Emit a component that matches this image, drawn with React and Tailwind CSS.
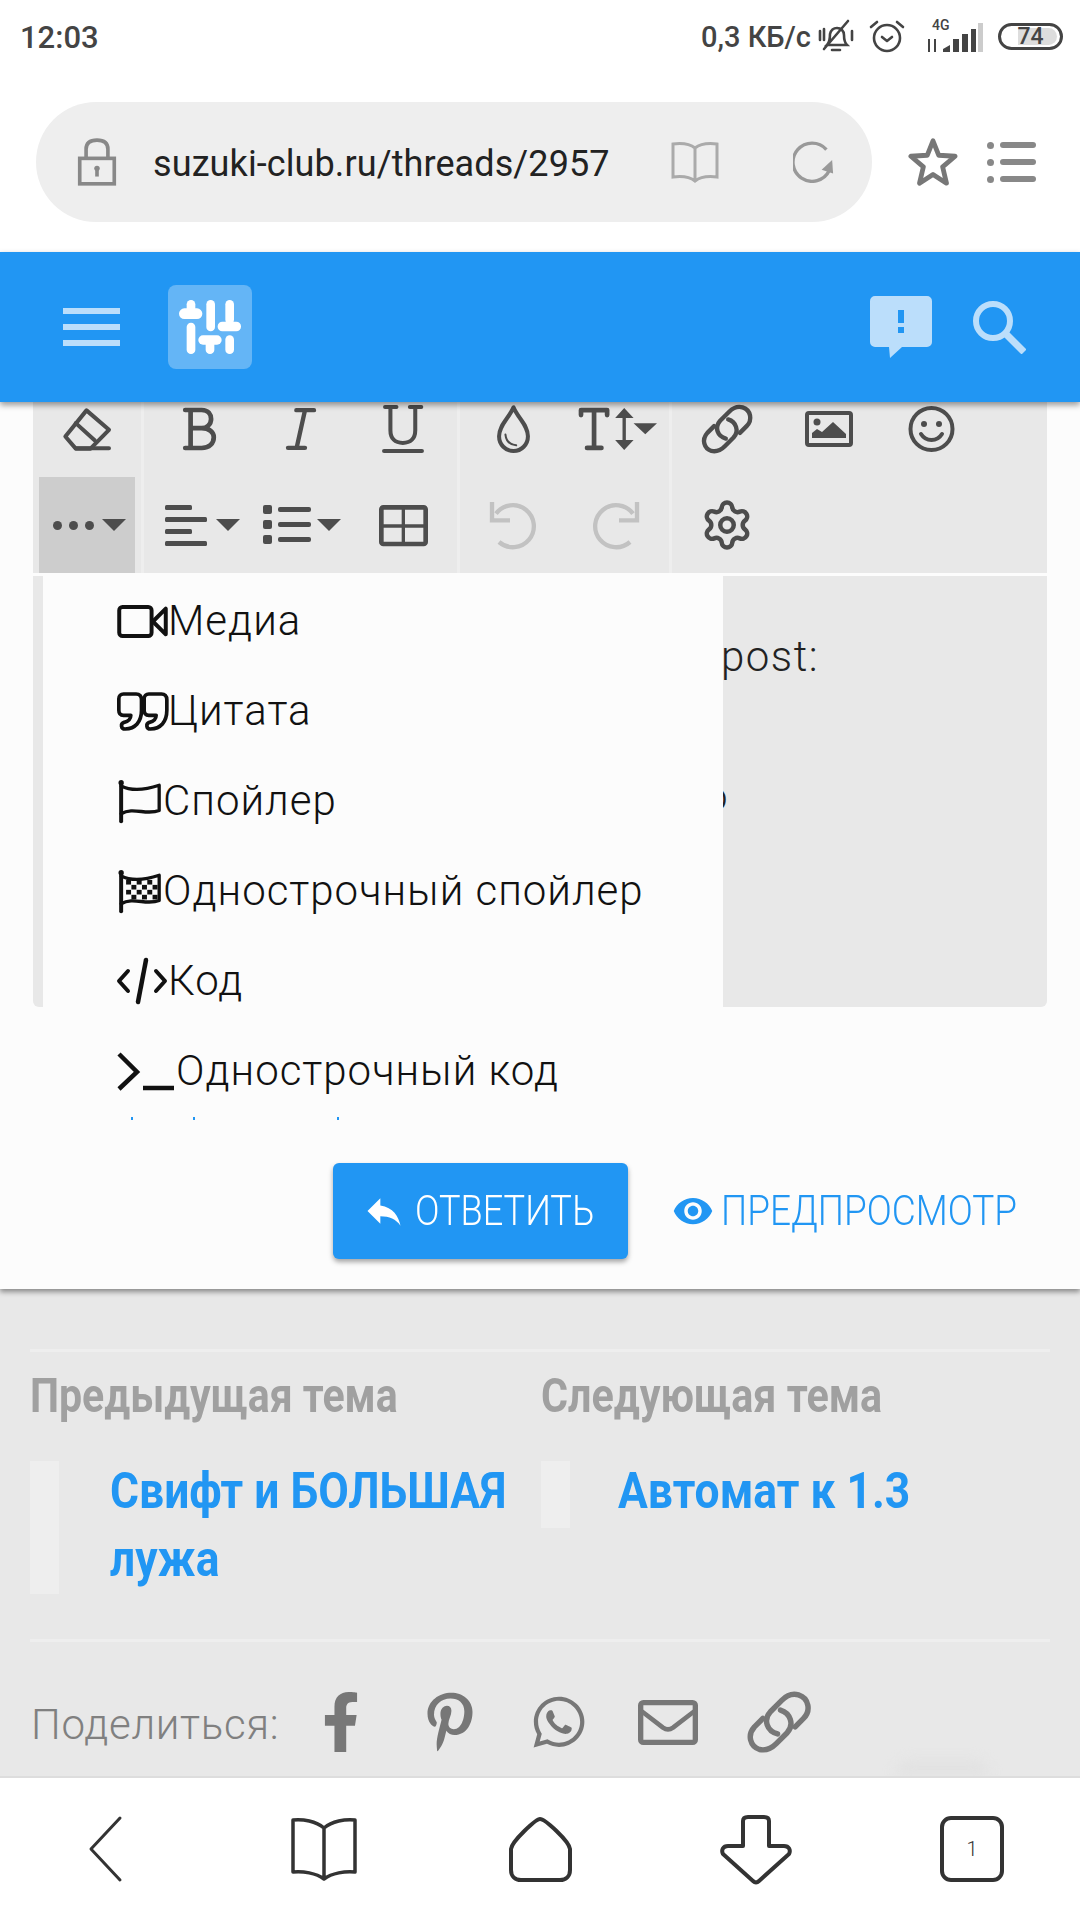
import { Settings } from 'lucide-react';
import { FaFacebookF, FaPinterestP, FaWhatsapp } from 'react-icons/fa';
import { MdReply, MdVisibility } from 'react-icons/md';

const StatusBar = () => (
  <div className="flex h-[72px] items-center justify-between bg-white pl-[20px] pr-[17px] font-medium text-[#444]">
    <span className="pt-[4px] text-[31px]">12:03</span>
    <div className="flex items-center">
      <span className="pt-[4px] text-[29px]">0,3 КБ/с</span>
      <svg viewBox="0 0 36 34" className="ml-[7px] h-[34px] w-[36px]" fill="none" stroke="#444" strokeWidth="2.6" strokeLinecap="round">
        <path d="M9 26c3-3 3-7 3-11 1-4 4-6 7-6 4 0 7 3 7 7 0 5 1 8 3 10H9zM14 31h8M6 30 30 2M2 12v9M6 10v11M34 12v9" />
      </svg>
      <svg viewBox="0 0 36 34" className="ml-[15px] h-[34px] w-[36px]" fill="none" stroke="#444" strokeWidth="2.6" strokeLinecap="round" strokeLinejoin="round">
        <circle cx="18" cy="19" r="13" />
        <path d="M13 18l5 4 5-4M2 8l6-5M34 8l-6-5" />
      </svg>
      <div className="relative ml-[21px] h-[32px] w-[57px]">
        <span className="absolute left-[6px] top-[-3px] text-[14px] leading-[16px]">4G</span>
        <svg viewBox="0 0 57 32" className="h-[32px] w-[57px]" fill="#444">
          <rect x="2" y="19" width="2" height="13" /><rect x="8" y="19" width="2" height="13" />
          <path d="M17 32v-3l7-4v7z" />
          <rect x="27" y="19" width="6" height="13" /><rect x="36" y="14" width="6" height="18" /><rect x="45" y="9" width="5" height="23" />
          <rect x="52" y="3" width="5" height="29" fill="#ccc" />
        </svg>
      </div>
      <div className="relative ml-[15px] flex h-[27px] w-[65px] items-center justify-center rounded-full border-[3px] border-[#444]">
        <div className="absolute bottom-[2px] left-[17px] top-[2px] w-[39px] rounded-r-full bg-[#ddd]" />
        <span className="relative text-[23px] leading-none">74</span>
      </div>
    </div>
  </div>
);

const AddressBar = () => (
  <div className="flex h-[180px] items-center bg-white pl-[36px]">
    <div className="flex h-[120px] w-[836px] items-center rounded-full bg-[#eee] pl-[41px]">
      <svg viewBox="0 0 44 52" className="h-[50px] w-[40px]" fill="none" stroke="#888" strokeWidth="4">
        <rect x="3" y="22" width="38" height="28" />
        <path d="M10 22V12C10 5 15 2 22 2s12 3 12 10v10" />
        <circle cx="22" cy="33" r="3" fill="#888" stroke="none" />
        <path d="M22 33v9" />
      </svg>
      <span className="ml-[36px] w-[518px] pt-[4px] text-[36px] tracking-[0.1px] text-[#222]">suzuki-club.ru/threads/2957</span>
      <svg viewBox="0 0 48 42" className="h-[42px] w-[48px]" fill="none" stroke="#aaa" strokeWidth="3">
        <path d="M24 7C19 3 10 2 2 3v33c8-1 17 0 22 4 5-4 14-5 22-4V3c-8-1-17 0-22 4v33" />
      </svg>
      <svg viewBox="0 0 44 44" className="ml-[74px] h-[42px] w-[42px]" fill="none" stroke="#999" strokeWidth="3.5">
        <path d="M38 31a20 20 0 1 1-3-22" />
        <path d="M30 30l11-10 1 14z" fill="#999" stroke="none" />
      </svg>
    </div>
    <svg viewBox="0 0 52 52" className="ml-[36px] h-[50px] w-[50px]" fill="none" stroke="#777" strokeWidth="5" strokeLinejoin="round">
      <path d="M26 4l6 15 17 1-13 11 4 17-14-9-14 9 4-17L3 20l17-1z" />
    </svg>
    <div className="ml-[29px] flex h-[41px] flex-col justify-between">
      {[0, 1, 2].map((i) => (
        <div key={i} className="flex items-center gap-[6px]">
          <div className="h-[7px] w-[7px] rounded-full bg-[#888]" />
          <div className="h-[6px] w-[36px] rounded-full bg-[#888]" />
        </div>
      ))}
    </div>
  </div>
);

const Header = () => (
  <div className="relative z-20 flex h-[150px] items-center bg-[#2196f3] pl-[63px] pr-[54px] shadow-[0_3px_6px_rgba(0,0,0,0.4)]">
    <div className="flex flex-col gap-[10px]">
      <div className="h-[6px] w-[57px] bg-[#bbdefb]" />
      <div className="h-[6px] w-[57px] bg-[#bbdefb]" />
      <div className="h-[6px] w-[57px] bg-[#bbdefb]" />
    </div>
    <div className="ml-[48px] flex h-[84px] w-[84px] items-center justify-center rounded-[8px] bg-[#64b5f6]">
      <svg viewBox="417 118 186 162" className="h-[54px] w-[62px]" fill="#fff">
        <rect x="440" y="118" width="26" height="50" rx="13" /><rect x="417" y="143" width="70" height="32" rx="16" /><rect x="440" y="186" width="26" height="94" rx="13" />
        <rect x="499" y="118" width="26" height="94" rx="13" /><rect x="475" y="224" width="70" height="28" rx="14" /><rect x="497" y="235" width="26" height="45" rx="13" />
        <rect x="556" y="118" width="26" height="72" rx="13" /><rect x="533" y="183" width="70" height="29" rx="14" /><rect x="556" y="224" width="26" height="56" rx="13" />
      </svg>
    </div>
    <div className="flex-1" />
    <svg viewBox="0 0 62 62" className="h-[62px] w-[62px]">
      <path d="M5 0h52a5 5 0 0 1 5 5v41a5 5 0 0 1-5 5H32L20 62l-1-11H5a5 5 0 0 1-5-5V5a5 5 0 0 1 5-5z" fill="#bbdefb" />
      <rect x="28" y="14" width="6" height="13" fill="#2196f3" /><rect x="28" y="31" width="6" height="6" fill="#2196f3" />
    </svg>
    <svg viewBox="0 0 54 54" className="ml-[40px] h-[54px] w-[54px]" fill="none" stroke="#bbdefb" strokeWidth="6">
      <circle cx="21" cy="21" r="17" />
      <path d="M33 33l19 19" strokeWidth="7" />
    </svg>
  </div>
);

const Tb = ({ vb, w, h, sw = 12, color = '#4d4d4d', children, className = '' }) => (
  <svg viewBox={vb} style={{ width: w, height: h }} className={`overflow-visible ${className}`} fill="none" stroke={color} strokeWidth={sw} strokeLinecap="round" strokeLinejoin="round">
    {children}
  </svg>
);

const Caret = () => (
  <svg viewBox="0 0 24 12" className="h-[12px] w-[24px]" fill="#4d4d4d"><path d="M0 0h24L12 12z" /></svg>
);

const LinkIcon = ({ w = 48, h = 48, color = '#4d4d4d', sw = 13 }) => (
  <Tb vb="787 15 143 143" w={w} h={h} sw={sw} color={color}>
    <path d="M897 98L917 78C935 60 930 30 905 22C888 17 875 25 865 35L838 62C820 82 830 108 855 115" />
    <path d="M820 78L800 98C782 118 790 145 812 152C830 156 842 148 852 138L878 112C896 92 885 65 862 58" />
  </Tb>
);

const Btn = ({ children }) => (
  <div className="flex h-[96px] w-[102px] items-center justify-center">{children}</div>
);

const Group = ({ className = '', children }) => (
  <div className={`flex border-r-[3px] border-[#eee] pr-[3px] ${className}`}>{children}</div>
);

const Toolbar = () => (
  <div className="relative z-10 mx-[33px] -mt-[21px] bg-[#e8e8e8] pl-[3px]">
    <div className="flex">
      <Group>
        <Btn>
          <Tb vb="70 25 143 125" w={48} h={42}>
            <path d="M140 32L207 90L152 146H108L77 110Z" />
            <path d="M108 70L165 122M108 145H207" />
          </Tb>
        </Btn>
      </Group>
      <Group className="ml-[4px]">
        <Btn>
          <Tb vb="430 25 97 125" w={33} h={42} sw={14}>
            <path d="M436 31H485C505 31 513 45 513 58C513 74 500 85 485 85H452M485 85C508 85 521 98 521 112C521 130 508 144 485 144H436M452 31V144" />
          </Tb>
        </Btn>
        <Btn>
          <Tb vb="735 25 90 125" w={30} h={42} sw={13}>
            <path d="M766 31H819M741 144H792M792 31L767 144" />
          </Tb>
        </Btn>
        <Btn>
          <Tb vb="1023 15 125 143" w={42} h={48} sw={12}>
            <path d="M1032 21H1066M1106 21H1140M1048 21V90C1048 115 1062 128 1085 128C1108 128 1122 115 1122 90V21M1029 152H1142" />
          </Tb>
        </Btn>
      </Group>
      <Group className="ml-[2px]">
        <Btn>
          <Tb vb="170 15 98 143" w={33} h={48}>
            <path d="M219 22C205 55 176 75 176 108C176 133 195 152 219 152C243 152 262 133 262 108C262 75 233 55 219 22Z" />
            <path d="M195 103C197 122 208 133 227 135" strokeWidth="6" />
          </Tb>
        </Btn>
        <Btn>
          <Tb vb="417 25 233 125" w={78} h={42} className="ml-[6px]">
            <path d="M423 46V31H501V46M462 31V144M441 144H484" strokeWidth="14" />
            <path d="M552 40V135" strokeWidth="10" />
            <path d="M552 25L580 55H525ZM552 150L580 120H525ZM580 70H650L615 103Z" fill="#4d4d4d" stroke="none" />
          </Tb>
        </Btn>
      </Group>
      <div className="ml-[4px] flex">
        <Btn><LinkIcon /></Btn>
        <Btn>
          <Tb vb="0 0 48 36" w={48} h={36} sw={4}>
            <rect x="2" y="2" width="44" height="32" rx="2" />
            <circle cx="12" cy="11" r="3.5" fill="#4d4d4d" stroke="none" />
            <path d="M7 27v-5l5-4 5 3 11-10 13 12v4z" fill="#4d4d4d" stroke="none" />
          </Tb>
        </Btn>
        <Btn>
          <Tb vb="0 0 47 46" w={47} h={46} sw={4}>
            <ellipse cx="23.5" cy="23" rx="21" ry="21" />
            <circle cx="16" cy="18" r="3" fill="#4d4d4d" stroke="none" />
            <circle cx="31" cy="18" r="3" fill="#4d4d4d" stroke="none" />
            <path d="M13 28c5 8 16 8 21 0" />
          </Tb>
        </Btn>
      </div>
    </div>
    <div className="flex">
      <Group>
        <div className="w-[3px]" />
        <div className="flex h-[96px] w-[96px] items-center justify-center gap-[8px] bg-[#cdcdcd] pl-[4px]">
          <div className="flex gap-[7px]">
            <div className="h-[9px] w-[9px] rounded-full bg-[#4d4d4d]" />
            <div className="h-[9px] w-[9px] rounded-full bg-[#4d4d4d]" />
            <div className="h-[9px] w-[9px] rounded-full bg-[#4d4d4d]" />
          </div>
          <Caret />
        </div>
        <div className="w-[3px]" />
      </Group>
      <Group className="ml-[4px]">
        <Btn>
          <div className="flex items-center gap-[9px] pl-[6px]">
            <svg viewBox="0 0 42 41" className="h-[41px] w-[42px]" fill="#4d4d4d">
              <rect x="0" y="0" width="27" height="5" rx="1.5" /><rect x="0" y="12" width="42" height="5" rx="1.5" />
              <rect x="0" y="24" width="27" height="5" rx="1.5" /><rect x="0" y="36" width="42" height="5" rx="1.5" />
            </svg>
            <Caret />
          </div>
        </Btn>
        <Btn>
          <div className="flex items-center gap-[6px] pl-[2px]">
            <svg viewBox="0 0 48 40" className="h-[40px] w-[48px]" fill="#4d4d4d">
              <rect x="0" y="0" width="9" height="9" rx="2" /><rect x="0" y="15" width="9" height="9" rx="2" /><rect x="0" y="30" width="9" height="9" rx="2" />
              <rect x="15" y="2" width="33" height="5" rx="2" /><rect x="15" y="17" width="33" height="5" rx="2" /><rect x="15" y="32" width="33" height="5" rx="2" />
            </svg>
            <Caret />
          </div>
        </Btn>
        <Btn>
          <Tb vb="1015 312 145 126" w={49} h={42} sw={14}>
            <rect x="1021" y="322" width="133" height="110" rx="6" />
            <path d="M1087 325V430M1021 378H1154" strokeWidth="10" strokeLinecap="butt" />
          </Tb>
        </Btn>
      </Group>
      <Group className="ml-[2px]">
        <Btn>
          <Tb vb="147 305 141 138" w={47} h={46} color="#c2c2c2" sw={13}>
            <path d="M174 425A63 63 0 1 0 165 340" strokeLinecap="butt" />
            <path d="M153 305V360H207" strokeLinecap="butt" strokeLinejoin="miter" />
          </Tb>
        </Btn>
        <Btn>
          <Tb vb="147 305 141 138" w={47} h={46} color="#c2c2c2" sw={13} className="-scale-x-100">
            <path d="M174 425A63 63 0 1 0 165 340" strokeLinecap="butt" />
            <path d="M153 305V360H207" strokeLinecap="butt" strokeLinejoin="miter" />
          </Tb>
        </Btn>
      </Group>
      <div className="ml-[4px] flex">
        <Btn><Settings size={54} strokeWidth={2} className="text-[#4d4d4d]" /></Btn>
      </div>
    </div>
  </div>
);

const flagSquares = [];
for (let r = 0; r < 4; r++) {
  for (let c = 0; c < 6; c++) {
    if ((r + c) % 2 === 0) flagSquares.push([78 + c * 16, 590 + r * 15]);
  }
}

const menuItems = [
  {
    label: 'Медиа',
    gap: 0,
    icon: (
      <Tb vb="52 35 153 100" w={51} h={33} color="#111">
        <rect x="58" y="41" width="98" height="88" rx="10" />
        <path d="M160 85L199 46V124Z" />
      </Tb>
    ),
  },
  {
    label: 'Цитата',
    gap: 0,
    icon: (
      <Tb vb="52 295 150 117" w={51} h={39} sw={11} color="#111">
        <path d="M70 301H108C118 301 124 308 124 318V350C124 385 105 405 75 406C62 406 60 390 72 386C85 384 92 375 92 365H70C60 365 56 358 56 350V315C56 306 62 301 70 301Z" />
        <path d="M146 301H184C194 301 200 308 200 318V350C200 385 181 405 151 406C138 406 136 390 148 386C161 384 168 375 168 365H146C136 365 132 358 132 350V315C132 306 138 301 146 301Z" />
      </Tb>
    ),
  },
  {
    label: 'Спойлер',
    gap: 1,
    icon: (
      <Tb vb="52 560 133 130" w={45} h={43} sw={10} color="#111">
        <circle cx="63" cy="568" r="8" fill="#111" stroke="none" />
        <path d="M63 570V685" strokeWidth="12" />
        <path d="M63 578C90 592 130 592 178 576V652C140 668 100 640 63 662" />
      </Tb>
    ),
  },
  {
    label: 'Однострочный спойлер',
    gap: 1,
    icon: (
      <Tb vb="52 560 133 130" w={45} h={43} sw={10} color="#111">
        <circle cx="63" cy="568" r="8" fill="#111" stroke="none" />
        <path d="M63 570V685" strokeWidth="12" />
        <path d="M63 578C90 592 130 592 178 576V652C140 668 100 640 63 662" />
        {flagSquares.map(([x, y]) => (
          <rect key={`${x}-${y}`} x={x} y={y} width="15" height="14" fill="#111" stroke="none" />
        ))}
      </Tb>
    ),
  },
  {
    label: 'Код',
    gap: 1,
    icon: (
      <Tb vb="0 0 50 44" w={50} h={44} sw={4} color="#111">
        <path d="M11 12L2 22l9 10M39 12l9 10-9 10" />
        <path d="M29 1L21 43" strokeWidth="4.5" />
      </Tb>
    ),
  },
  {
    label: 'Однострочный код',
    gap: 2,
    icon: (
      <Tb vb="0 0 57 39" w={57} h={39} sw={4.5} color="#111">
        <path d="M2 2L20 20L2 37" strokeLinecap="butt" strokeLinejoin="miter" />
        <path d="M26 36H57" strokeLinecap="butt" />
      </Tb>
    ),
  },
];

const InsertMenu = () => (
  <div className="absolute left-[10px] top-0 z-10 h-[544px] w-[680px] bg-[#fcfcfc] pl-[74px]">
    {menuItems.map((item) => (
      <div key={item.label} className="flex h-[90px] items-center text-[#111]">
        {item.icon}
        <span style={{ marginLeft: item.gap }} className="whitespace-nowrap text-[42px] font-light leading-none tracking-[1px]">{item.label}</span>
      </div>
    ))}
    <div className="absolute bottom-0 left-[88px] h-[3px] w-[2px] bg-[#2196f3]" />
    <div className="absolute bottom-0 left-[150px] h-[3px] w-[2px] bg-[#2196f3]" />
    <div className="absolute bottom-0 left-[294px] h-[3px] w-[2px] bg-[#2196f3]" />
  </div>
);

const Editor = () => (
  <div className="relative mx-[33px] mt-[3px] h-[431px] rounded-b-[6px] bg-[#e8e8e8] pl-[688px] pt-[54px] text-[42px] font-light leading-[54px] tracking-[1.5px] text-[#222]">
    <InsertMenu />
    <p>post:</p>
    <p className="mt-[86px] -ml-[17px]">о</p>
  </div>
);

const Actions = () => (
  <div className="flex h-[282px] items-start pl-[333px] pt-[156px]">
    <div className="flex h-[96px] w-[295px] items-center rounded-[6px] bg-[#2196f3] pl-[29px] text-white shadow-[0_3px_5px_rgba(0,0,0,0.35)]">
      <MdReply size={44} />
      <span className="ml-[9px] origin-left scale-x-[0.86] whitespace-nowrap text-[42px] font-light leading-none">ОТВЕТИТЬ</span>
    </div>
    <div className="ml-[44px] flex h-[96px] items-center text-[#2196f3]">
      <MdVisibility size={42} />
      <span className="ml-[7px] origin-left scale-x-[0.88] whitespace-nowrap text-[42px] font-light leading-none">ПРЕДПРОСМОТР</span>
    </div>
  </div>
);

const ThreadNav = () => (
  <div className="mx-[30px] mt-[60px] grid h-[293px] grid-cols-[511px_1fr] border-y-[3px] border-[#eee] pt-[19px]">
    <div>
      <div className="origin-left scale-x-[0.855] whitespace-nowrap text-[48px] font-bold leading-[50px] text-[#a0a0a0]">Предыдущая тема</div>
      <div className="mt-[40px] flex">
        <div className="h-[133px] w-[29px] shrink-0 bg-[#eee]" />
        <div className="-mt-[4px] ml-[51px] origin-left scale-x-[0.888] whitespace-nowrap text-[50px] font-bold leading-[68px] text-[#2196f3]">Свифт и БОЛЬШАЯ<br />лужа</div>
      </div>
    </div>
    <div>
      <div className="origin-left scale-x-[0.86] whitespace-nowrap text-[48px] font-bold leading-[50px] text-[#a0a0a0]">Следующая тема</div>
      <div className="mt-[40px] flex">
        <div className="h-[67px] w-[29px] shrink-0 bg-[#eee]" />
        <div className="-mt-[4px] ml-[48px] origin-left scale-x-[0.888] whitespace-nowrap text-[50px] font-bold leading-[68px] text-[#2196f3]">Автомат к 1.3</div>
      </div>
    </div>
  </div>
);

const ShareRow = () => (
  <div className="relative mt-[50px] flex h-[60px] items-center pl-[31px] text-[#777]">
    <span className="w-[255px] whitespace-nowrap pt-[5px] text-[42px] font-light leading-none tracking-[0.7px] text-[#808080]">Поделиться:</span>
    <div className="flex w-[109px] justify-center"><FaFacebookF size={60} /></div>
    <div className="flex w-[109px] justify-center"><FaPinterestP size={60} /></div>
    <div className="flex w-[109px] justify-center"><FaWhatsapp size={58} /></div>
    <div className="flex w-[109px] justify-center">
      <Tb vb="1010 60 180 135" w={60} h={45} sw={16} color="#777">
        <rect x="1018" y="68" width="164" height="119" rx="8" />
        <path d="M1024 96L1085 143C1095 150 1105 150 1115 143L1176 96" strokeWidth="14" />
      </Tb>
    </div>
    <div className="flex w-[113px] justify-center"><LinkIcon w={60} h={60} color="#777" sw={13} /></div>
  </div>
);

const BottomNav = () => (
  <div className="relative z-10 grid h-[144px] grid-cols-5 place-items-center border-t-[2px] border-[#ddd] bg-white">
    <Tb vb="0 0 33 64" w={33} h={64} sw={3} color="#333" className="-ml-[5px]"><path d="M31 1L2 32l29 31" /></Tb>
    <Tb vb="0 0 66 63" w={66} h={63} sw={3.5} color="#333">
      <path d="M33 10C25 3 12 1 2 2V54C12 53 25 55 33 61C41 55 54 53 64 54V2C54 1 41 3 33 10V61" />
    </Tb>
    <Tb vb="0 0 65 66" w={65} h={66} sw={4} color="#333">
      <path d="M32 3C28 3 4 25 3 33V54C3 60 7 64 13 64H52C58 64 62 60 62 54V33C61 25 37 3 32 3Z" />
    </Tb>
    <Tb vb="0 0 72 69" w={72} h={69} sw={4} color="#333">
      <path d="M23 6C23 3 25 2 28 2H44C47 2 49 3 49 6V31H64C69 31 71 35 69 39L39 66C37 68 35 68 33 66L3 39C1 35 3 31 8 31H23Z" />
    </Tb>
    <div className="flex h-[66px] w-[64px] items-center justify-center rounded-[11px] border-[4px] border-[#333] text-[20px] font-light text-[#333]">1</div>
  </div>
);

export default function App() {
  return (
    <div className="relative h-[1920px] w-[1080px] overflow-hidden bg-[#e8e8e8] font-['Roboto','Noto_Sans',sans-serif]">
      <StatusBar />
      <AddressBar />
      <Header />
      <div className="relative z-[5] bg-[#fcfcfc] shadow-[0_3px_5px_rgba(0,0,0,0.4)]">
        <Toolbar />
        <Editor />
        <Actions />
      </div>
      <ThreadNav />
      <ShareRow />
      <div className="absolute bottom-[144px] left-[895px] h-[16px] w-[95px] rounded-t-full bg-[#e2e2e2] blur-[6px]" />
      <div className="absolute bottom-0 left-0 right-0"><BottomNav /></div>
    </div>
  );
}
